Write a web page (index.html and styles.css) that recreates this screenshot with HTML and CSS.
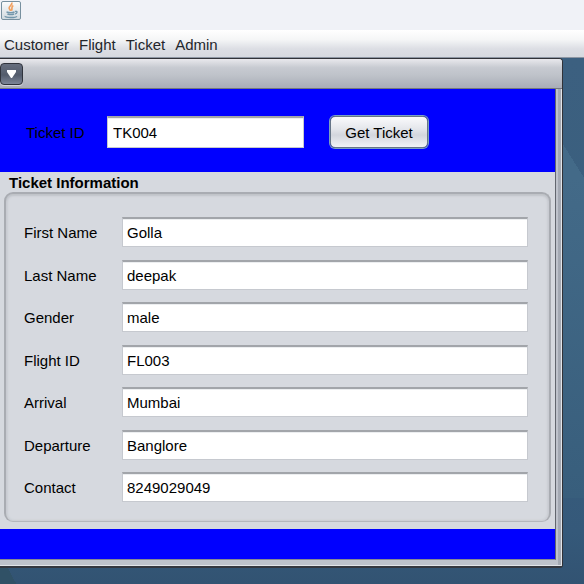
FILE: index.html
```html
<!DOCTYPE html>
<html lang="en">
<head>
<meta charset="utf-8">
<meta name="viewport" content="width=device-width, initial-scale=1">
<title>Ticket</title>
<link rel="stylesheet" href="styles.css">
</head>
<body>
<header class="app-title">
  <svg class="app-icon" viewBox="0 0 20 19" aria-hidden="true">
    <defs>
      <linearGradient id="tile" x1="0" y1="0" x2="0" y2="1">
        <stop offset="0" stop-color="#fcfcfc"/><stop offset="1" stop-color="#cfd9df"/>
      </linearGradient>
    </defs>
    <rect x=".5" y=".5" width="19" height="18" rx="1.5" fill="url(#tile)" stroke="#77909f"/>
    <path d="M10.8 1.5C11.8 4 7.6 5.200 8.200 7.200C8.500 8.300 9.500 8.800 9.600 10M12.300 4.600C9.600 6.200 11.800 7.500 10.500 9.400" fill="none" stroke="#f0a060" stroke-width="1.7"/>
    <path d="M5.500 11Q10 12.500 13.500 11M6.400 13Q10 14.200 13 13M14 10.500C16.800 9.700 16.600 12.600 13.800 13.100M4.200 15C3.500 17 15 17 15.800 15.200" fill="none" stroke="#7397ab" stroke-width="1.400"/>
  </svg>
</header>
<nav class="menu-bar">
  <a href="#customer">Customer</a>
  <a href="#flight">Flight</a>
  <a href="#ticket">Ticket</a>
  <a href="#admin">Admin</a>
</nav>
<main class="desktop">
  <section class="frame">
    <div class="frame-title">
      <button class="frame-menu" type="button" aria-label="Window menu">
        <svg viewBox="0 0 9 9" aria-hidden="true"><path d="M0 0H9V2L5 8H4L0 2Z" fill="#fff"/></svg>
      </button>
    </div>
    <div class="frame-body">
      <form class="content">
        <div class="search">
          <label for="ticket-id">Ticket ID</label>
          <input id="ticket-id" class="field" type="text" value="TK004">
          <button class="get" type="button">Get Ticket</button>
        </div>
        <div class="info">
          <h2>Ticket Information</h2>
          <div class="panel">
            <div class="row"><label for="first">First Name</label><input id="first" class="field" type="text" value="Golla"></div>
            <div class="row"><label for="last">Last Name</label><input id="last" class="field" type="text" value="deepak"></div>
            <div class="row"><label for="gender">Gender</label><input id="gender" class="field" type="text" value="male"></div>
            <div class="row"><label for="flight-id">Flight ID</label><input id="flight-id" class="field" type="text" value="FL003"></div>
            <div class="row"><label for="arrival">Arrival</label><input id="arrival" class="field" type="text" value="Mumbai"></div>
            <div class="row"><label for="departure">Departure</label><input id="departure" class="field" type="text" value="Banglore"></div>
            <div class="row"><label for="contact">Contact</label><input id="contact" class="field" type="text" value="8249029049"></div>
          </div>
        </div>
        <div class="footer"></div>
      </form>
    </div>
  </section>
</main>
</body>
</html>
```
FILE: styles.css
```css
* { box-sizing: border-box; }

body {
  display: flex;
  flex-direction: column;
  min-height: 100vh;
  margin: 0;
  color: #000;
  font: 15px/18px "Liberation Sans", Arial, sans-serif;
}

.app-title {
  height: 30px;
  padding: 1px;
  background: #f0f2f7;
}

.app-icon {
  display: block;
  width: 20px;
  height: 19px;
}

.menu-bar {
  display: flex;
  gap: 10px;
  height: 28px;
  padding: 6px 4px 0;
  border-bottom: 1px solid #8d96a3;
  background: linear-gradient(#fff, #f5f6f7 35%, #dcdee4 70%, #d6d9df);
}

.menu-bar a {
  color: #23262b;
  text-decoration: none;
}

.desktop {
  flex: 1;
  padding-right: 21px;
  background:
    linear-gradient(58deg, #436a88 50%, transparent 50%) right 86px / 21px 34px no-repeat,
    linear-gradient(#436a88, #385e7c) right 120px / 21px 320px no-repeat,
    linear-gradient(62deg, #305166 50%, transparent 50%) left bottom / 22px 20px no-repeat,
    linear-gradient(#3c6080, #395e7c 60%, #35597a 90%, #325372);
}

.frame {
  border: 1px solid #303238;
  border-width: 1px 1px 2px 0;
  border-bottom-color: #34373f;
  border-radius: 0 4px 3px 0;
  background: #b4b8c0;
  overflow: hidden;
}

.frame-title {
  height: 30px;
  padding-top: 4px;
  border-bottom: 1px solid #74777f;
  background: linear-gradient(#e9e9ed, #c7cad1 30%, #bfc3ca 55%, #a9adb7);
}

.frame-menu {
  display: flex;
  align-items: center;
  justify-content: center;
  width: 23px;
  height: 22px;
  padding: 0 1px 0 0;
  border: 1px solid #30343d;
  border-radius: 4px;
  background: linear-gradient(#666e7e, #535c6c 55%, #7b8496);
  box-shadow: 0 1px #d4d6db;
}

.frame-menu svg {
  width: 9px;
  height: 9px;
}

.frame-body {
  padding: 0 5px 5px 0;
  border-right: 1px solid #e2e4e8;
  border-bottom: 1px solid #e2e4e8;
  background: linear-gradient(90deg, transparent calc(100% - 3px), #a4a9b3 0), #bec2cb;
}

.content {
  border-right: 1px solid #62666e;
  border-bottom: 1px solid #858993;
  background: #d6d9df;
}

.search {
  display: flex;
  align-items: center;
  height: 83px;
  padding: 3px 26px 0;
  background: #00f;
}

.search label,
.row label { padding-top: 2px; }

.search label { width: 81px; }

.field {
  min-width: 0;
  height: 30px;
  padding: 0 4px;
  border: 1px solid #c6c9cf;
  border-top: 2px solid #a2a5aa;
  background: #fff;
  box-shadow: inset 0 1px #eceef0;
  color: inherit;
  font: inherit;
}

.search .field {
  width: 197px;
  height: 32px;
  padding: 0 5px;
}

.get {
  width: 98px;
  height: 32px;
  margin-left: 26px;
  padding: 1px 0 0;
  border: 1px solid #667587;
  border-radius: 5px;
  background: linear-gradient(#fafafc, #e4e6eb 40%, #d3d6dd 60%, #f0f2f6);
  box-shadow: 0 0 0 1px #7ba0c0;
  color: inherit;
  font: inherit;
}

.info { padding: 2px 4px 7px; }

.info h2 {
  margin: 0;
  padding-left: 5px;
  font: bold 15px/18px "Liberation Sans", Arial, sans-serif;
}

.panel {
  display: flex;
  flex-direction: column;
  justify-content: space-between;
  min-height: 330px;
  padding: 23px 21px 19px 18px;
  border: 2px solid #a9acb2;
  border-bottom: 1px solid #b4b7bd;
  border-radius: 9px;
  box-shadow: inset 0 2px 2px #c0c3c9, inset -2px 0 2px #cccfd5, inset 2px 0 2px #cccfd5, inset 0 -1px 2px #cccfd5;
}

.row {
  display: flex;
  align-items: center;
}

.row label {
  flex: 0 0 98px;
}

.row .field { flex: 1; }

.footer {
  height: 30px;
  background: #00f;
}
```
